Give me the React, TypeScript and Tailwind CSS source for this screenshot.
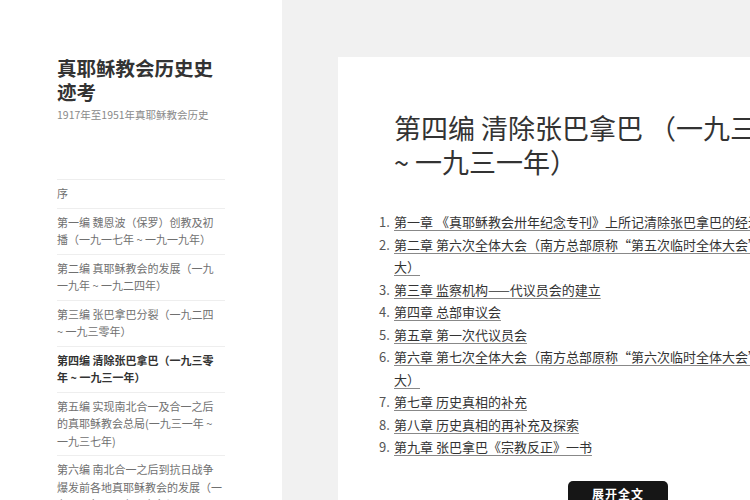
import React from "react";

const font = { fontFamily: '"Noto Sans CJK SC", "Noto Sans", sans-serif' };

const menu: { lines: string[]; active?: boolean }[] = [
  { lines: ["序"] },
  { lines: ["第一编 魏恩波（保罗）创教及初", "播（一九一七年 ~ 一九一九年）"] },
  { lines: ["第二编 真耶稣教会的发展（一九", "一九年 ~ 一九二四年）"] },
  { lines: ["第三编 张巴拿巴分裂（一九二四", "~ 一九三零年）"] },
  { lines: ["第四编 清除张巴拿巴（一九三零", "年 ~ 一九三一年）"], active: true },
  { lines: ["第五编 实现南北合一及合一之后", "的真耶稣教会总局(一九三一年 ~", "一九三七年)"] },
  { lines: ["第六编 南北合一之后到抗日战争", "爆发前各地真耶稣教会的发展（一", "九三一年 ~ 一九三七年）"] },
];

const chapters: string[][] = [
  ["第一章 《真耶稣教会卅年纪念专刊》上所记清除张巴拿巴的经过"],
  ["第二章 第六次全体大会（南方总部原称“第五次临时全体大会”的全体大", "大）"],
  ["第三章 监察机构——代议员会的建立"],
  ["第四章 总部审议会"],
  ["第五章 第一次代议员会"],
  ["第六章 第七次全体大会（南方总部原称“第六次临时全体大会”的全体大", "大）"],
  ["第七章 历史真相的补充"],
  ["第八章 历史真相的再补充及探索"],
  ["第九章 张巴拿巴《宗教反正》一书"],
];

export default function App() {
  return (
    <div
      className="relative flex w-[750px] h-[500px] overflow-hidden bg-white [text-spacing-trim:space-all]"
      style={font}
    >
      <aside className="w-[282px] shrink-0 bg-white pl-[57px] pt-[56px]">
        <h1 className="text-[19.5px] leading-[24px] font-bold text-[#333] whitespace-nowrap">
          真耶稣教会历史史
          <br />
          迹考
        </h1>
        <p className="mt-[2px] text-[10.5px] leading-[17px] text-[#8a8a8a] whitespace-nowrap">
          1917年至1951年真耶稣教会历史
        </p>
        <ul className="mt-[56px] w-[168px] border-b border-[#eeeeee]">
          {menu.map((m, i) => (
            <li key={i} className="border-t border-[#eeeeee] py-[5px]">
              {m.lines.map((l, j) => (
                <div
                  key={j}
                  className={
                    "text-[11px] leading-[17.5px] whitespace-nowrap " +
                    (m.active ? "font-bold text-[#333]" : "text-[#707070]")
                  }
                >
                  {l}
                </div>
              ))}
            </li>
          ))}
        </ul>
      </aside>
      <main className="flex-1 bg-[#f1f1f1] pl-[56px] pt-[57px]">
        <div className="w-[600px] h-[600px] bg-white pl-[56px] pt-[54px]">
          <h2 className="text-[27px] leading-[34px] text-[#333] whitespace-nowrap">
            第四编 清除张巴拿巴 （一九三零年
            <br />~ 一九三一年）
          </h2>
          <ol className="mt-[32px] -ml-[15px]">
            {chapters.map((c, i) => (
              <li key={i} className="flex text-[13px] leading-[22.5px] text-[#333]">
                <span className="w-[15px] shrink-0 text-[#555]">{i + 1}.</span>
                <span className="whitespace-nowrap">
                  {c.map((l, j) => (
                    <div key={j}>
                      <span className="underline decoration-[#888] underline-offset-[3px]">{l}</span>
                    </div>
                  ))}
                </span>
              </li>
            ))}
          </ol>
        </div>
      </main>
      <div className="absolute left-[568px] top-[481px] w-[100px] h-[30px] rounded-[5px] bg-[#161616] flex justify-center pt-[5px]">
        <span className="text-[12px] leading-[16px] font-bold text-white tracking-[1px]">展开全文</span>
      </div>
    </div>
  );
}
